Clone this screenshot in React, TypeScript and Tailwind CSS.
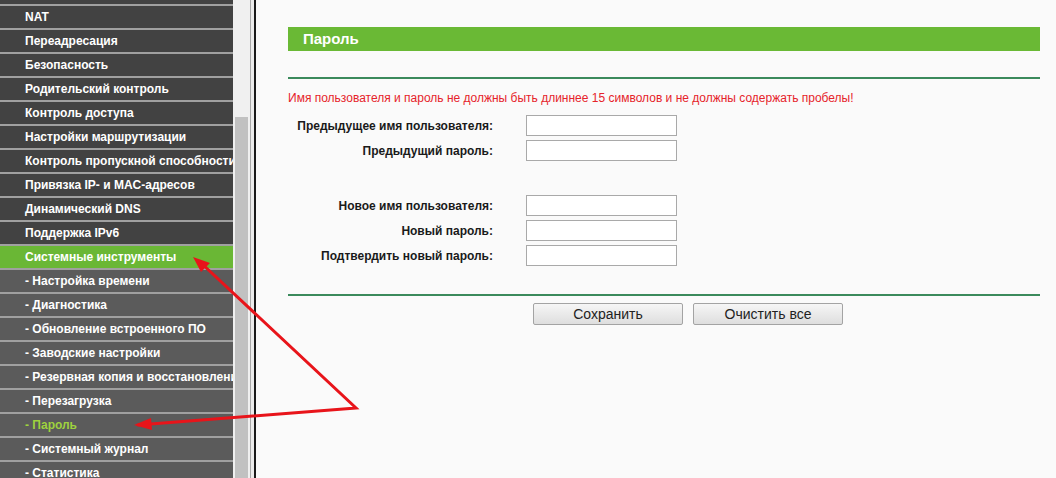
import React from 'react';

type MenuItem = { label: string; sub?: boolean; active?: boolean; current?: boolean };

const menu: MenuItem[] = [
  { label: 'NAT' },
  { label: 'Переадресация' },
  { label: 'Безопасность' },
  { label: 'Родительский контроль' },
  { label: 'Контроль доступа' },
  { label: 'Настройки маршрутизации' },
  { label: 'Контроль пропускной способности' },
  { label: 'Привязка IP- и MAC-адресов' },
  { label: 'Динамический DNS' },
  { label: 'Поддержка IPv6' },
  { label: 'Системные инструменты', active: true },
  { label: '- Настройка времени', sub: true },
  { label: '- Диагностика', sub: true },
  { label: '- Обновление встроенного ПО', sub: true },
  { label: '- Заводские настройки', sub: true },
  { label: '- Резервная копия и восстановление', sub: true },
  { label: '- Перезагрузка', sub: true },
  { label: '- Пароль', sub: true, current: true },
  { label: '- Системный журнал', sub: true },
  { label: '- Статистика', sub: true },
];

const Campo = ({ label }: { label: string }) => (
  <div className="flex items-center h-[25px]">
    <div className="w-[205px] text-right font-bold text-[12px] text-[#1a1a1a]">{label}</div>
    <div className="w-[33px]" />
    <input type="text" className="w-[151px] h-[21px] bg-white border border-[#a9a9a9] outline-none" />
  </div>
);

const Boton = ({ children }: { children: React.ReactNode }) => (
  <button className="w-[150px] h-[22px] border border-[#a3a3a3] rounded-[2px] bg-gradient-to-b from-[#f6f6f6] to-[#dedede] text-[14px] text-[#222] leading-none">
    {children}
  </button>
);

export default function App() {
  return (
    <div className="relative flex w-[1056px] h-[478px] overflow-hidden bg-[#fafafa]" style={{ fontFamily: '"Liberation Sans", Arial, sans-serif' }}>
      {/* MENU LATERAL */}
      <div className="w-[233px] shrink-0 bg-[#424242]">
        <div className="h-[4px] bg-[#424242]" />
        {menu.map((m) => (
          <div
            key={m.label}
            className={`h-[24px] border-t-2 border-[#a0a0a0] pl-[25px] flex items-center whitespace-nowrap overflow-hidden font-bold text-[12px] ${
              m.active ? 'bg-[#6ab735] text-white' : m.sub ? 'bg-[#5b5b5b]' : 'bg-[#424242]'
            } ${m.current ? 'text-[#9fd23e]' : 'text-white'}`}
          >
            {m.label}
          </div>
        ))}
      </div>

      {/* SCROLLBAR */}
      <div className="w-[17px] shrink-0 bg-[#f0f0f0] flex flex-col">
        <div className="h-[117px]" />
        <div className="flex-1 ml-[2px] w-[13px] bg-[#c1c1c1]" />
      </div>
      <div className="w-[6px] shrink-0 border-l border-[#a8a8a8] border-r-2 border-r-[#1a1a1a] bg-[#ececec]" />

      {/* CONTENIDO */}
      <div className="flex-1 pl-[32px] pr-[16px] pt-[27px]">
        <div className="h-[24px] bg-[#6ab935] flex items-center pl-[15px] text-white font-bold text-[15px]">Пароль</div>
        <div className="mt-[26px] h-[2px] bg-[#3b8a5c]" />
        <div className="mt-[12px] text-[12px] text-[#e6232a] leading-[14px]">
          Имя пользователя и пароль не должны быть длиннее 15 символов и не должны содержать пробелы!
        </div>
        <div className="mt-[8px]">
          <Campo label="Предыдущее имя пользователя:" />
          <Campo label="Предыдущий пароль:" />
          <div className="h-[30px]" />
          <Campo label="Новое имя пользователя:" />
          <Campo label="Новый пароль:" />
          <Campo label="Подтвердить новый пароль:" />
        </div>
        <div className="mt-[26px] h-[2px] bg-[#3b8a5c]" />
        <div className="mt-[7px] flex gap-[10px] pl-[245px]">
          <Boton>Сохранить</Boton>
          <Boton>Очистить все</Boton>
        </div>
      </div>

      {/* FLECHAS */}
      <svg className="absolute inset-0 pointer-events-none" width="1056" height="478" viewBox="0 0 1056 478">
        <g stroke="#e8141a" strokeWidth="3" fill="none" strokeLinecap="round">
          <polyline points="200,262 356,408 138,425" />
        </g>
        <polygon points="193,257 210,263 201,272" fill="#e8141a" />
        <polygon points="134,425 151,418 152,430" fill="#e8141a" />
      </svg>
    </div>
  );
}
